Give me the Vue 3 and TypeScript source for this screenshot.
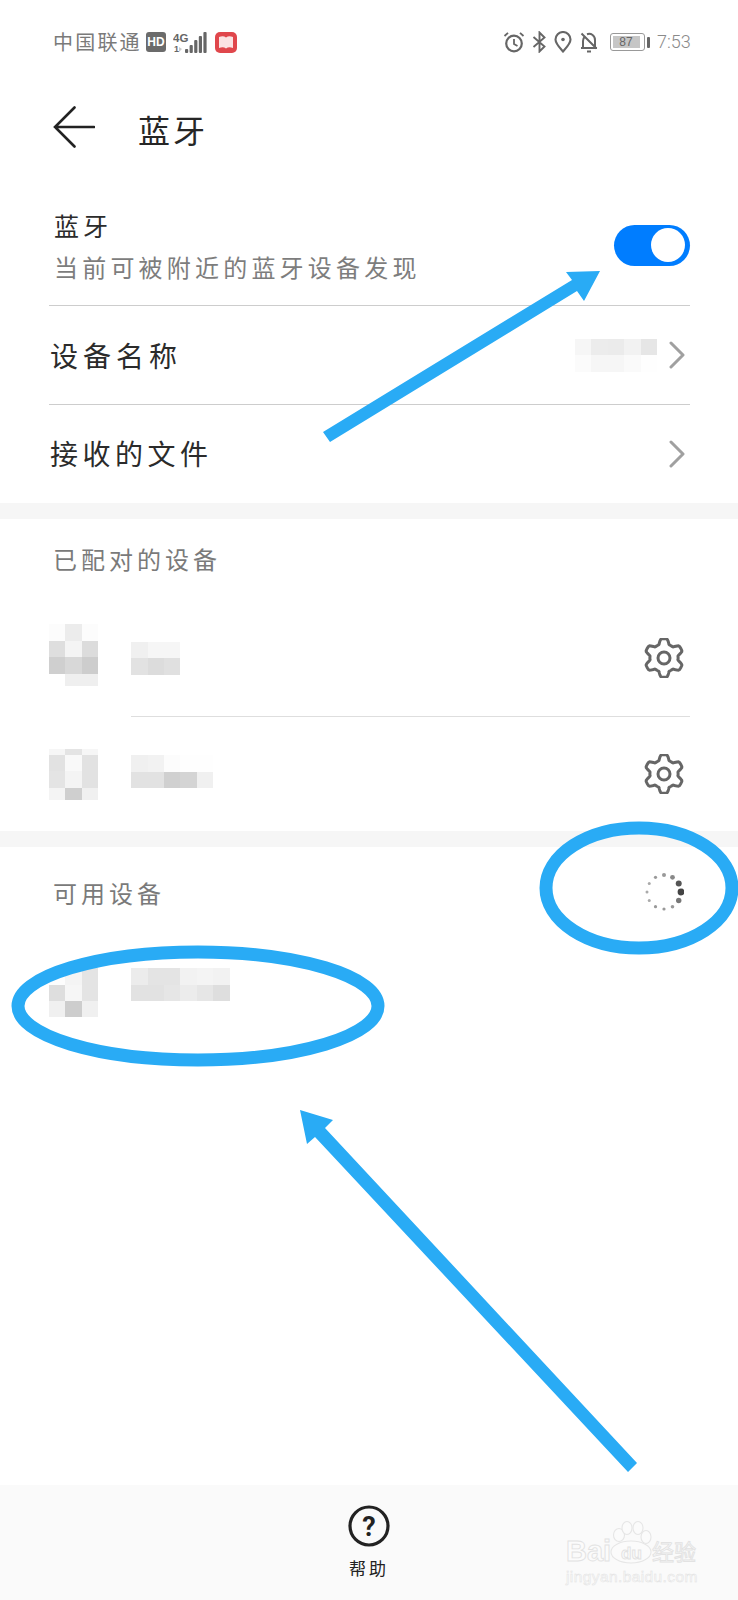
<script setup lang="ts">
type Mosaic = { cols: number; rowH: number[]; cells: string[] }

const CELL = 16.4

// pixelated (censored) blocks from the screenshot
const valueBlur: Mosaic = {
  cols: 5,
  rowH: [16.5, 16.5],
  cells: ['#f6f6f6', '#ececec', '#ebebeb', '#f2f2f2', '#e6e6e6', '#fbfbfb', '#f6f6f6', '#f6f6f6', '#fafafa', '#fefefe'],
}

const devices: { icon: Mosaic; name: Mosaic; rowClass: string }[] = [
  {
    rowClass: 'first',
    icon: {
      cols: 3,
      rowH: [17, 16, 17, 12],
      cells: ['#fcfcfc', '#ececec', '#fcfcfc', '#dedede', '#f4f4f4', '#dcdcdc', '#cfcfcf', '#d8d8d8', '#cdcdcd', '#ffffff', '#efefef', '#efefef'],
    },
    name: {
      cols: 3,
      rowH: [16.5, 16.5],
      cells: ['#f0f0f0', '#f6f6f6', '#f6f6f6', '#e2e2e2', '#dcdcdc', '#e0e0e0'],
    },
  },
  {
    rowClass: 'second',
    icon: {
      cols: 3,
      rowH: [6, 16, 17, 12],
      cells: ['#f6f6f6', '#e4e4e4', '#f6f6f6', '#e2e2e2', '#f9f9f9', '#e2e2e2', '#e4e4e4', '#f4f4f4', '#e2e2e2', '#f4f4f4', '#cfcfcf', '#f0f0f0'],
    },
    name: {
      cols: 5,
      rowH: [16.5, 16.5],
      cells: ['#f0f0f0', '#f2f2f2', '#fcfcfc', '#fefefe', '#fefefe', '#e2e2e2', '#e2e2e2', '#d0d0d0', '#d4d4d4', '#f0f0f0'],
    },
  },
]

const available: { icon: Mosaic; name: Mosaic } = {
  icon: {
    cols: 3,
    rowH: [17, 16, 16],
    cells: ['#fdfdfd', '#f4f4f4', '#e4e4e4', '#dedede', '#f6f6f6', '#e4e4e4', '#f0f0f0', '#cdcdcd', '#f0f0f0'],
  },
  name: {
    cols: 6,
    rowH: [16.5, 16.5],
    cells: ['#ececec', '#e4e4e4', '#e4e4e4', '#f2f2f2', '#f4f4f4', '#f2f2f2', '#e2e2e2', '#e2e2e2', '#e6e6e6', '#ececec', '#e6e6e6', '#dedede'],
  },
}

function gridStyle(m: Mosaic) {
  return {
    gridTemplateColumns: `repeat(${m.cols}, ${CELL}px)`,
    gridTemplateRows: m.rowH.map((h) => h + 'px').join(' '),
  }
}

// gear outline with six rounded teeth
function makeGear(): string {
  const pts: string[] = []
  for (let i = 0; i < 144; i++) {
    const a = (i / 144) * Math.PI * 2
    const wave = Math.max(-1, Math.min(1, 1.7 * Math.cos(6 * a)))
    const r = 16.7 + 2.6 * wave
    const x = 20 + r * Math.sin(a)
    const y = 20 - r * Math.cos(a)
    pts.push(`${x.toFixed(2)} ${y.toFixed(2)}`)
  }
  return 'M' + pts.join('L') + 'Z'
}
const gearPath = makeGear()

const spinnerDots = [
  [2, '#999'], [2.4, '#888'], [3, '#555'], [3.4, '#444'], [2.7, '#777'], [1.8, '#999'],
  [1.6, '#999'], [1.6, '#999'], [1.5, '#aaa'], [1.5, '#aaa'], [1.5, '#aaa'], [1.6, '#999'],
].map(([r, fill], i) => {
  const a = (i * 30 * Math.PI) / 180
  return { r: r as number, fill: fill as string, cx: 20 + 17 * Math.sin(a), cy: 20 - 17 * Math.cos(a) }
})
</script>

<template>
  <div class="phone">
    <div class="status">
      <div class="status-left">
        <span class="carrier">中国联通</span>
        <span class="hd">HD</span>
        <svg class="net" width="34" height="21" viewBox="0 0 34 21">
          <text x="0" y="10" class="net-text">4G</text>
          <text x="1" y="20" class="net-text small">1</text>
          <path d="M6 15l3 2-3 3z" fill="#ccc" />
          <g fill="#666">
            <rect x="12" y="17" width="3.2" height="4" rx="1" />
            <rect x="16.6" y="13" width="3.2" height="8" rx="1" />
            <rect x="21.2" y="8" width="3.2" height="13" rx="1" />
            <rect x="25.8" y="4" width="3.2" height="17" rx="1" />
            <rect x="30.4" y="0" width="3.2" height="21" rx="1" />
          </g>
        </svg>
        <svg class="book" width="22" height="21" viewBox="0 0 22 21">
          <rect width="22" height="21" rx="5" fill="#e0474c" />
          <path d="M4 5c3-1 5-1 7 .5C13 4 15 4 18 5v11c-3-1-5-1-7 .5C9 15 7 15 4 16z" fill="#fbe3e3" />
        </svg>
      </div>
      <div class="status-right">
        <svg width="22" height="22" viewBox="0 0 22 22" fill="none" stroke="#666" stroke-width="2.2">
          <circle cx="11" cy="12.5" r="7.8" />
          <path d="M11 8v5l3.5 2" stroke-width="1.8" />
          <path d="M1.5 5L5 1.8M20.5 5L17 1.8" stroke-width="1.8" />
        </svg>
        <svg width="15" height="22" viewBox="0 0 15 22" fill="none" stroke="#666" stroke-width="1.9">
          <path d="M1.5 6l11 9.5L7.5 20.5V1.5l5 5L1.5 16" />
        </svg>
        <svg width="18" height="22" viewBox="0 0 18 22" fill="none" stroke="#666" stroke-width="2.1">
          <path d="M9 20.5C5 16 1.5 12.5 1.5 8.5a7.5 7.5 0 0 1 15 0c0 4-3.5 7.5-7.5 12z" />
          <circle cx="9" cy="8.5" r="1.8" fill="#666" stroke="none" />
        </svg>
        <svg width="20" height="22" viewBox="0 0 20 22" fill="none" stroke="#666" stroke-width="2">
          <path d="M2 17h16M4 17V10a6 6 0 0 1 2-4.5M8 3.2a6 6 0 0 1 8 6V17" />
          <path d="M8 20.5h4M2.5 2.5l15 15" />
        </svg>
        <div class="battery"><span class="battery-fill">87</span></div>
        <span class="battery-tip"></span>
        <span class="clock">7:53</span>
      </div>
    </div>

    <div class="title-bar">
      <svg width="42" height="42" viewBox="0 0 42 42" fill="none" stroke="#222" stroke-width="2.6" stroke-linecap="round">
        <path d="M41 21H2M21.5 1.5L2 21l19.5 19.5" />
      </svg>
      <span class="title">蓝牙</span>
    </div>

    <section class="group">
      <div class="row bt-row">
        <div class="bt-text">
          <div class="bt-label">蓝牙</div>
          <div class="bt-sub">当前可被附近的蓝牙设备发现</div>
        </div>
        <div class="switch"><span class="knob"></span></div>
      </div>
      <div class="row link-row">
        <span class="link-label">设备名称</span>
        <div class="link-end">
          <div class="mosaic" :style="gridStyle(valueBlur)">
            <i v-for="(c, i) in valueBlur.cells" :key="i" :style="{ background: c }"></i>
          </div>
          <svg width="16" height="28" viewBox="0 0 16 28" fill="none" stroke="#a0a0a0" stroke-width="3" stroke-linecap="round" stroke-linejoin="round">
            <path d="M2 2l12 12L2 26" />
          </svg>
        </div>
      </div>
      <div class="row link-row last">
        <span class="link-label">接收的文件</span>
        <div class="link-end">
          <svg width="16" height="28" viewBox="0 0 16 28" fill="none" stroke="#a0a0a0" stroke-width="3" stroke-linecap="round" stroke-linejoin="round">
            <path d="M2 2l12 12L2 26" />
          </svg>
        </div>
      </div>
    </section>

    <div class="gap"></div>

    <section class="paired">
      <div class="sub-head">已配对的设备</div>
      <div v-for="d in devices" :key="d.rowClass" class="device" :class="d.rowClass">
        <div class="mosaic dev-icon" :style="gridStyle(d.icon)">
          <i v-for="(c, i) in d.icon.cells" :key="i" :style="{ background: c }"></i>
        </div>
        <div class="device-body">
          <div class="mosaic" :style="gridStyle(d.name)">
            <i v-for="(c, i) in d.name.cells" :key="i" :style="{ background: c }"></i>
          </div>
          <svg class="gear" width="40" height="40" viewBox="0 0 40 40" fill="none" stroke="#666" stroke-width="3" stroke-linejoin="round">
            <path :d="gearPath" />
            <circle cx="20" cy="20" r="6" />
          </svg>
        </div>
      </div>
    </section>

    <div class="gap"></div>

    <section class="avail">
      <div class="avail-head">
        <span class="avail-title">可用设备</span>
        <svg width="40" height="40" viewBox="0 0 40 40">
          <circle v-for="(dot, i) in spinnerDots" :key="i" :cx="dot.cx" :cy="dot.cy" :r="dot.r" :fill="dot.fill" />
        </svg>
      </div>
      <div class="avail-device">
        <div class="mosaic dev-icon" :style="gridStyle(available.icon)">
          <i v-for="(c, i) in available.icon.cells" :key="i" :style="{ background: c }"></i>
        </div>
        <div class="mosaic" :style="gridStyle(available.name)">
          <i v-for="(c, i) in available.name.cells" :key="i" :style="{ background: c }"></i>
        </div>
      </div>
    </section>

    <footer class="bottom">
      <svg width="42" height="42" viewBox="0 0 42 42">
        <circle cx="21" cy="21" r="19" fill="none" stroke="#222" stroke-width="3.2" />
        <text x="21" y="30.5" text-anchor="middle" class="help-mark">?</text>
      </svg>
      <span class="help-label">帮助</span>
    </footer>

    <!-- hand-drawn annotations and the site watermark sit on top of the screenshot -->
    <svg class="overlay" width="738" height="1600" viewBox="0 0 738 1600">
      <g fill="#29abf5">
        <polygon points="323,432 572,280 566,272 600,271 584,301 577,291 330,442" />
        <polygon points="637,1463 325,1128 333,1120 300,1110 307,1144 315,1137 628,1472" />
      </g>
      <g fill="none" stroke="#29abf5" stroke-width="13">
        <ellipse cx="639" cy="888" rx="93" ry="60" />
        <ellipse cx="198" cy="1006" rx="180" ry="54" />
      </g>
      <g class="mark">
        <g fill="#fbfbfb" stroke="#e6e6e6" stroke-width="1.1">
          <ellipse cx="619" cy="1535" rx="5.5" ry="6.5" />
          <ellipse cx="627" cy="1528" rx="5" ry="6.5" />
          <ellipse cx="638" cy="1528" rx="5" ry="6.5" />
          <ellipse cx="646" cy="1537" rx="5" ry="6.5" />
          <ellipse cx="631" cy="1552" rx="20" ry="11" />
        </g>
        <text x="566" y="1561" class="mark-big">Bai</text>
        <text x="621" y="1559" class="mark-du">du</text>
        <text x="652" y="1560" class="mark-cn">经验</text>
        <text x="566" y="1582" class="mark-url">jingyan.baidu.com</text>
      </g>
    </svg>
  </div>
</template>

<style>
html,
body {
  margin: 0;
  background: #fff;
}
</style>

<style scoped>
.phone {
  position: relative;
  width: 738px;
  height: 1600px;
  display: flex;
  flex-direction: column;
  overflow: hidden;
  background: #fff;
  font-family: "Noto Sans CJK SC", "Noto Sans", sans-serif;
  color: #222;
}

.status {
  height: 84px;
  flex: none;
  display: flex;
  justify-content: space-between;
  align-items: flex-start;
  padding: 31px 48px 0 53px;
  box-sizing: border-box;
}
.status-left,
.status-right {
  display: flex;
  align-items: center;
  height: 22px;
}
.carrier {
  font-size: 20px;
  letter-spacing: 2.2px;
  line-height: 22px;
  color: #7a7a7a;
  white-space: nowrap;
  width: 93px;
}
.hd {
  width: 20px;
  height: 20px;
  border-radius: 3px;
  background: #6b6b6b;
  color: #fff;
  font: bold 12px/20px "Liberation Sans", sans-serif;
  text-align: center;
}
.net {
  margin-left: 7px;
}
.net-text {
  font: bold 11.5px "Liberation Sans", sans-serif;
  fill: #666;
}
.net-text.small {
  font-size: 9px;
}
.book {
  margin-left: 8px;
}
.status-right {
  gap: 7px;
}
.battery {
  width: 35px;
  height: 18px;
  margin-left: 4px;
  box-sizing: border-box;
  border: 1.5px solid #999;
  border-radius: 3px;
  padding: 1.5px;
}
.battery-fill {
  display: block;
  width: 27px;
  height: 12px;
  background: #c6c6c6;
  color: #666;
  font: 12px/12px "Liberation Sans", sans-serif;
  text-align: center;
}
.battery-tip {
  width: 3px;
  height: 11px;
  margin-left: -5px;
  background: #666;
  border-radius: 1px;
}
.clock {
  font: 300 18px/22px Roboto, "Liberation Sans", sans-serif;
  color: #8a8a8a;
  width: 33px;
}

.title-bar {
  height: 78px;
  flex: none;
  display: flex;
  align-items: center;
  padding: 8px 0 0 53px;
  box-sizing: border-box;
}
.title {
  margin-left: 43px;
  margin-top: 4px;
  font-size: 32px;
  line-height: 40px;
  letter-spacing: 3px;
  color: #262626;
}

.group {
  flex: none;
}
.row {
  margin: 0 48px 0 49px;
  display: flex;
  align-items: center;
  justify-content: space-between;
  box-sizing: border-box;
  border-bottom: 1px solid #cdcdcd;
}
.bt-row {
  height: 144px;
  padding-top: 23px;
}
.bt-text {
  padding-left: 5px;
}
.bt-label {
  font-size: 25px;
  line-height: 32px;
  letter-spacing: 4px;
  color: #2b2b2b;
}
.bt-sub {
  margin-top: 11px;
  font-size: 24px;
  line-height: 30px;
  letter-spacing: 4.2px;
  color: #7d7d7d;
  white-space: nowrap;
}
.switch {
  width: 76px;
  height: 41px;
  border-radius: 21px;
  background: #007dff;
  position: relative;
}
.knob {
  position: absolute;
  right: 5px;
  top: 3.5px;
  width: 34px;
  height: 34px;
  border-radius: 50%;
  background: #fff;
}
.link-row {
  height: 99px;
}
.link-row.last {
  height: 98px;
  border-bottom: none;
}
.link-label {
  padding-left: 1px;
  font-size: 28px;
  line-height: 36px;
  letter-spacing: 5px;
  color: #2b2b2b;
}
.link-row.last .link-label {
  letter-spacing: 4.5px;
  margin-top: -2px;
}
.link-end {
  display: flex;
  align-items: center;
  gap: 12px;
  padding-right: 5px;
}

.mosaic {
  display: grid;
}
.mosaic i {
  display: block;
}

.gap {
  height: 16px;
  flex: none;
  background: #f6f6f6;
}

.paired {
  height: 312px;
  flex: none;
}
.sub-head {
  height: 81px;
  padding: 24px 0 0 53px;
  box-sizing: border-box;
  font-size: 24px;
  line-height: 32px;
  letter-spacing: 4px;
  color: #7a7a7a;
}
.device {
  display: flex;
  align-items: center;
  padding: 0 48px 0 49px;
}
.device.first {
  height: 117px;
}
.device.second {
  height: 114px;
}
.dev-icon {
  flex: none;
  margin-right: 33px;
}
.device.first .dev-icon {
  margin-bottom: 8px;
}
.device.second .device-body .mosaic {
  margin-top: -5px;
}
.device-body {
  flex: 1;
  height: 100%;
  display: flex;
  align-items: center;
  justify-content: space-between;
  padding-right: 6px;
}
.device.first .device-body {
  border-bottom: 1px solid #dedede;
  box-sizing: border-box;
}

.avail {
  flex: 1;
  min-height: 0;
}
.avail-head {
  height: 100px;
  display: flex;
  justify-content: space-between;
  align-items: flex-start;
  box-sizing: border-box;
  padding: 25px 54px 0 53px;
}
.avail-title {
  margin-top: 5px;
  font-size: 24px;
  line-height: 32px;
  letter-spacing: 4px;
  color: #7a7a7a;
}
.avail-device {
  display: flex;
  align-items: flex-start;
  padding: 21px 0 0 49px;
}

.bottom {
  height: 115px;
  flex: none;
  background: #fafafa;
  display: flex;
  flex-direction: column;
  align-items: center;
  padding: 20px 0 0;
  box-sizing: border-box;
}
.help-mark {
  font: bold 27px Roboto, "Liberation Sans", sans-serif;
  fill: #222;
}
.help-label {
  margin-top: 10px;
  font-size: 17px;
  line-height: 22px;
  letter-spacing: 3px;
  color: #222;
}

.overlay {
  position: absolute;
  left: 0;
  top: 0;
  pointer-events: none;
}
.mark text {
  fill: #fbfbfb;
  stroke: #e2e2e2;
  stroke-width: 0.9;
}
.mark-big {
  font: bold 29px "Liberation Sans", sans-serif;
}
.mark-du {
  font: bold 17px "Liberation Sans", sans-serif;
}
.mark-cn {
  font: 22px "Noto Sans CJK SC", sans-serif;
}
.mark .mark-url {
  font: 15.5px "Liberation Sans", sans-serif;
  stroke-width: 0.5;
  letter-spacing: 0.4px;
}
</style>
